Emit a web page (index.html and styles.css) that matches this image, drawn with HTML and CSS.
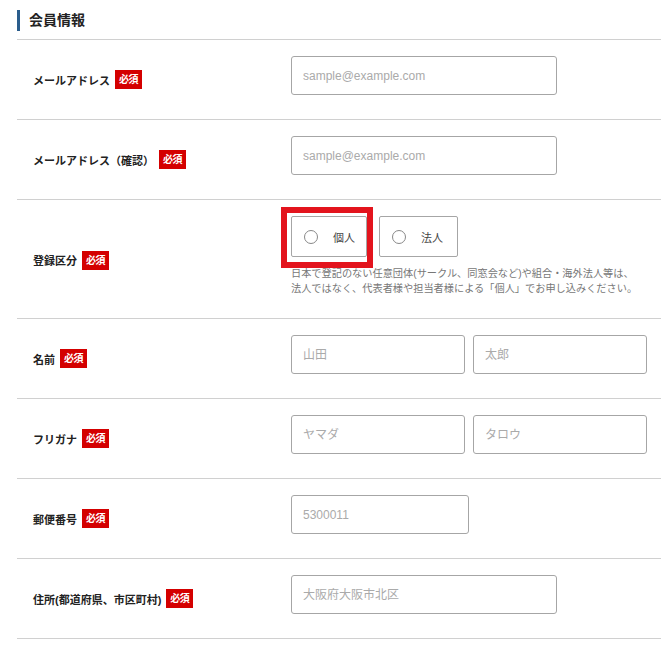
FILE: index.html
```html
<!DOCTYPE html>
<html lang="ja">
<head>
<meta charset="utf-8">
<title>会員情報</title>
<link rel="stylesheet" href="styles.css">
</head>
<body>
<section class="form">
  <h2 class="heading">会員情報</h2>

  <div class="row">
    <div class="label">メールアドレス<span class="req">必須</span></div>
    <div class="field"><input class="input w-long" type="text" placeholder="sample@example.com"></div>
  </div>

  <div class="row">
    <div class="label">メールアドレス（確認）<span class="req">必須</span></div>
    <div class="field"><input class="input w-long" type="text" placeholder="sample@example.com"></div>
  </div>

  <div class="row row-radio">
    <div class="label">登録区分<span class="req">必須</span></div>
    <div class="field">
      <div class="radios">
        <label class="radio r1"><span class="dot"></span>個人<span class="mark"></span></label>
        <label class="radio r2"><span class="dot"></span>法人</label>
      </div>
      <p class="note">日本で登記のない任意団体(サークル、同窓会など)や組合・海外法人等は、<br>法人ではなく、代表者様や担当者様による「個人」でお申し込みください。</p>
    </div>
  </div>

  <div class="row">
    <div class="label">名前<span class="req">必須</span></div>
    <div class="field pair">
      <input class="input w-half" type="text" placeholder="山田">
      <input class="input w-half" type="text" placeholder="太郎">
    </div>
  </div>

  <div class="row">
    <div class="label">フリガナ<span class="req">必須</span></div>
    <div class="field pair">
      <input class="input w-half" type="text" placeholder="ヤマダ">
      <input class="input w-half" type="text" placeholder="タロウ">
    </div>
  </div>

  <div class="row">
    <div class="label">郵便番号<span class="req">必須</span></div>
    <div class="field"><input class="input w-zip" type="text" placeholder="5300011"></div>
  </div>

  <div class="row last">
    <div class="label">住所(都道府県、市区町村)<span class="req">必須</span></div>
    <div class="field"><input class="input w-long" type="text" placeholder="大阪府大阪市北区"></div>
  </div>
</section>
</body>
</html>
```
FILE: styles.css
```css
* { box-sizing: border-box; }
html, body { background: #fff; }
body {
  margin: 0;
  font-family: "Liberation Sans", "Noto Sans CJK JP", sans-serif;
  color: #222;
}
.form {
  margin: 0 11px 0 17px;
  padding-top: 10px;
  width: 644px;
}
.heading {
  margin: 0;
  height: 21px;
  border-left: 3px solid #2a5d8c;
  padding-left: 9px;
  font-size: 14px;
  line-height: 21px;
  font-weight: bold;
  color: #222;
  margin-bottom: 8px;
}
.row {
  display: grid;
  grid-template-columns: 274px 1fr;
  align-items: center;
  border-top: 1px solid #d0d0d0;
  padding: 16px 0 24px;
  min-height: 80px;
}
.row.last { border-bottom: 1px solid #d0d0d0; }
.label {
  padding-left: 16px;
  font-size: 11px;
  font-weight: bold;
  color: #222;
  display: flex;
  align-items: center;
  align-self: center;
  margin-bottom: -8px;
}
.req {
  display: inline-block;
  margin-left: 5px;
  background: #d40000;
  color: #fff;
  font-size: 10px;
  font-weight: bold;
  line-height: 19px;
  height: 19px;
  padding: 0 4px;
  letter-spacing: -0.5px;
}
.field { align-self: start; }
.pair { display: flex; gap: 8px; }
.input {
  display: block;
  height: 39px;
  border: 1px solid #a6a6a6;
  border-radius: 3px;
  padding: 0 11px;
  font-family: "Liberation Sans", "Noto Sans CJK JP", sans-serif;
  font-size: 12px;
  color: #333;
  background: #fff;
  outline: none;
}
.input::placeholder { color: #aaa; }
.w-long { width: 266px; }
.w-half { width: 174px; }
.w-zip { width: 178px; }
.row-radio { padding-bottom: 22px; }
.radios { display: flex; gap: 12px; }
.radio {
  position: relative;
  display: flex;
  align-items: center;
  height: 41px;
  border: 1px solid #a6a6a6;
  border-radius: 2px;
  padding-left: 12px;
  font-size: 11px;
  font-weight: normal;
  color: #444;
}
.r1 { width: 76px; }
.r2 { width: 79px; }
.dot {
  width: 14px;
  height: 14px;
  border: 1px solid #888;
  border-radius: 50%;
  margin-right: 15px;
  background: #fff;
}
.mark {
  position: absolute;
  left: -11px;
  top: -10px;
  right: -7px;
  bottom: -12px;
  border: 6px solid #e3141d;
  pointer-events: none;
}
.note {
  margin: 9px 0 0;
  font-size: 10.2px;
  line-height: 15px;
  color: #777;
}
```
